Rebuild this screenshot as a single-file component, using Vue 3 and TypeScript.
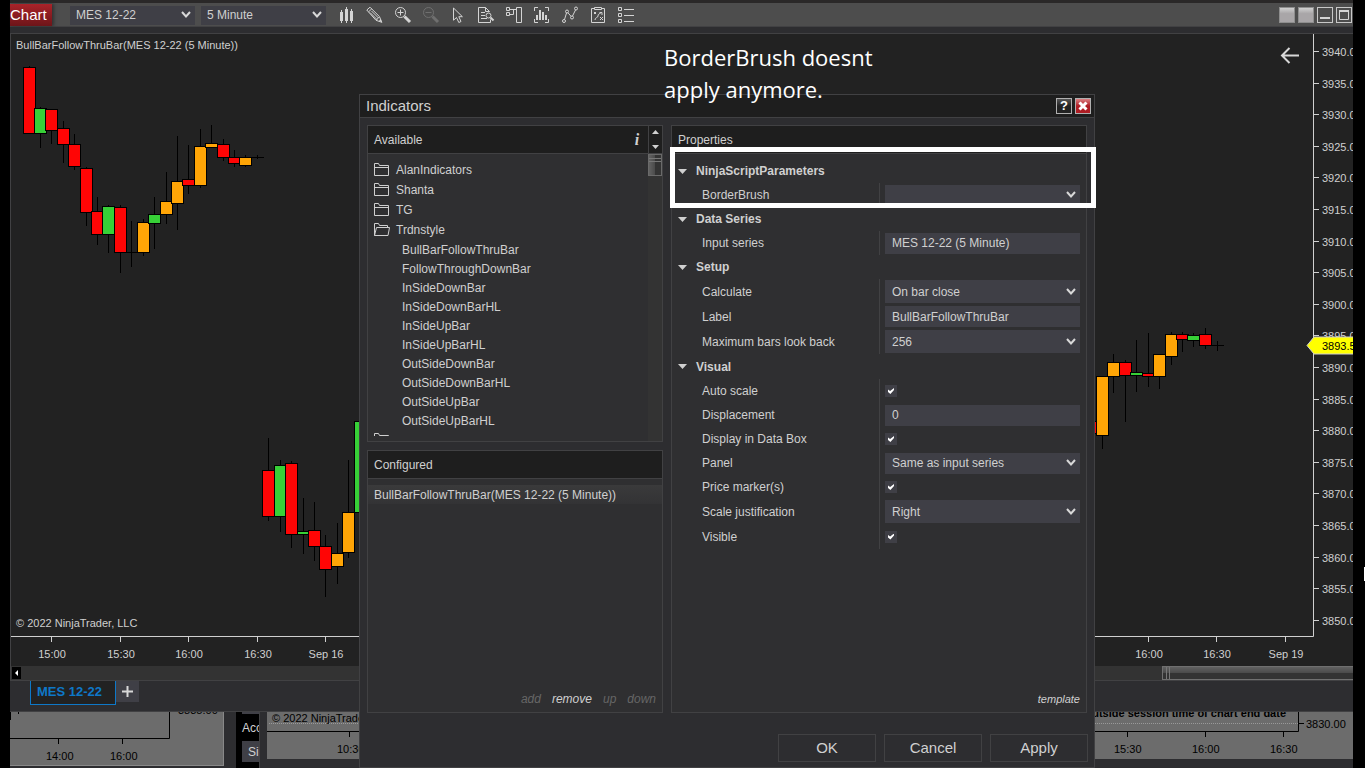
<script setup lang="ts">
import { ref } from 'vue'

type Tone = 'down' | 'up' | 'follow'
// left edge, body top, body bottom, wick top, wick bottom, tone
type Candle = [number, number, number, number, number, Tone]

const candles: Candle[] = [
  [23, 67, 134, 66, 134, 'down'],
  [34, 108, 134, 107, 148, 'up'],
  [45, 109, 131, 109, 144, 'down'],
  [57, 128, 145, 121, 163, 'down'],
  [68, 144, 167, 134, 170, 'down'],
  [80, 168, 213, 167, 226, 'down'],
  [91, 211, 235, 197, 245, 'down'],
  [102, 206, 235, 205, 253, 'up'],
  [114, 207, 253, 205, 273, 'down'],
  [125, 252, 253, 221, 267, 'down'],
  [137, 222, 253, 219, 256, 'follow'],
  [148, 214, 224, 197, 249, 'up'],
  [160, 201, 215, 172, 224, 'follow'],
  [171, 181, 204, 136, 230, 'follow'],
  [182, 179, 186, 145, 194, 'down'],
  [194, 146, 186, 129, 188, 'follow'],
  [205, 143, 148, 125, 148, 'follow'],
  [217, 144, 158, 139, 161, 'down'],
  [228, 157, 164, 150, 167, 'down'],
  [239, 157, 166, 155, 167, 'follow'],
  [251, 157, 158, 155, 159, 'down'],
  [262, 470, 517, 438, 521, 'down'],
  [274, 465, 517, 460, 532, 'up'],
  [285, 463, 535, 461, 548, 'down'],
  [297, 531, 535, 498, 554, 'up'],
  [308, 530, 547, 502, 561, 'down'],
  [319, 546, 570, 535, 597, 'down'],
  [331, 553, 567, 523, 584, 'follow'],
  [342, 512, 553, 460, 558, 'follow'],
  [354, 421, 513, 421, 513, 'up'],
  [1084, 421, 434, 421, 434, 'down'],
  [1096, 376, 436, 376, 449, 'follow'],
  [1107, 362, 377, 354, 393, 'follow'],
  [1119, 362, 376, 360, 422, 'down'],
  [1130, 372, 376, 340, 392, 'up'],
  [1142, 373, 377, 333, 387, 'down'],
  [1153, 354, 377, 354, 389, 'follow'],
  [1165, 334, 357, 332, 365, 'follow'],
  [1176, 334, 340, 332, 352, 'down'],
  [1187, 335, 341, 333, 347, 'up'],
  [1199, 334, 346, 328, 349, 'down'],
  [1211, 345, 346, 341, 351, 'down'],
]

const prices = Array.from({ length: 19 }, (_, i) => ({
  label: (3940 - i * 5).toFixed(1),
  y: Math.round(51 + i * 31.6),
}))

const times = [
  { x: 51, label: '15:00' },
  { x: 120, label: '15:30' },
  { x: 188, label: '16:00' },
  { x: 257, label: '16:30' },
  { x: 325, label: 'Sep 16' },
  { x: 1148, label: '16:00' },
  { x: 1216, label: '16:30' },
  { x: 1285, label: 'Sep 19' },
]

const folders = ['AlanIndicators', 'Shanta', 'TG']
const scripts = [
  'BullBarFollowThruBar', 'FollowThroughDownBar', 'InSideDownBar', 'InSideDownBarHL', 'InSideUpBar',
  'InSideUpBarHL', 'OutSideDownBar', 'OutSideDownBarHL', 'OutSideUpBar', 'OutSideUpBarHL',
]

interface Field {
  id: string
  label: string
  kind: 'select' | 'text' | 'check'
  value: string
  tall?: boolean
  big?: boolean
}
interface Group { name: string; tall?: boolean; fields: Field[] }

const groups = ref<Group[]>([
  { name: 'NinjaScriptParameters', fields: [{ id: 'brush', label: 'BorderBrush', kind: 'select', value: '' }] },
  { name: 'Data Series', fields: [{ id: 'series', label: 'Input series', kind: 'text', value: 'MES 12-22 (5 Minute)' }] },
  {
    name: 'Setup',
    fields: [
      { id: 'calc', label: 'Calculate', kind: 'select', value: 'On bar close', tall: true, big: true },
      { id: 'label', label: 'Label', kind: 'text', value: 'BullBarFollowThruBar', tall: true },
      { id: 'lookback', label: 'Maximum bars look back', kind: 'select', value: '256', tall: true, big: true },
    ],
  },
  {
    name: 'Visual',
    tall: true,
    fields: [
      { id: 'auto', label: 'Auto scale', kind: 'check', value: '' },
      { id: 'disp', label: 'Displacement', kind: 'text', value: '0' },
      { id: 'databox', label: 'Display in Data Box', kind: 'check', value: '' },
      { id: 'panel', label: 'Panel', kind: 'select', value: 'Same as input series' },
      { id: 'marker', label: 'Price marker(s)', kind: 'check', value: '' },
      { id: 'justify', label: 'Scale justification', kind: 'select', value: 'Right', tall: true, big: true },
      { id: 'visible', label: 'Visible', kind: 'check', value: '', tall: true },
    ],
  },
])
</script>

<template>
  <div class="screen">
    <header class="toolbar">
      <h1 class="badge">Chart</h1>
      <div class="pick">
        <select aria-label="Instrument"><option>MES 12-22</option></select>
        <svg class="chev" width="12" height="8" viewBox="0 0 12 8"><path d="M2 1l4 4.500 4-4.500" /></svg>
      </div>
      <div class="pick second">
        <select aria-label="Interval"><option>5 Minute</option></select>
        <svg class="chev" width="12" height="8" viewBox="0 0 12 8"><path d="M2 1l4 4.500 4-4.500" /></svg>
      </div>
      <nav class="tools">
        <button aria-label="Chart style">
          <svg viewBox="0 0 18 18"><path class="fill" d="M2 6h3v9H2zM7 3h3v12H7zM12 5h3v10h-3zM3 4h1v13H3zM8 1h1v16H8zM13 3h1v14h-1z" /></svg>
        </button>
        <button aria-label="Drawing tools">
          <svg viewBox="0 0 18 18"><path d="M.8 4L4 1.2l9.500 9.500 2.300 5.600-5.800-2zM2.600 5.800L5.800 2.800M4 6.500l7 7M5.500 5l7 7M10.300 14l3-3" /><path class="fill" d="M13 14.500l1.500-1.500 1.800 3.800z" /></svg>
        </button>
        <button aria-label="Zoom in">
          <svg viewBox="0 0 18 18"><circle cx="6.500" cy="6.500" r="5" /><path d="M3.500 6.500h6M6.500 3.500v6" /><path class="thick" d="M10.500 10.500l5.500 5.500" /></svg>
        </button>
        <button aria-label="Zoom out" disabled>
          <svg viewBox="0 0 18 18"><circle cx="6.500" cy="6.500" r="5" /><path d="M3.500 6.500h6" /><path class="thick" d="M10.500 10.500l5.500 5.500" /></svg>
        </button>
        <button aria-label="Cursor">
          <svg viewBox="0 0 18 18"><path d="M3.500 2v12.200l3-2.700 2.300 5 2.200-1-2.200-4.800h3.600z" /></svg>
        </button>
        <button aria-label="Data box">
          <svg viewBox="0 0 18 18"><path d="M12.500 13.500v3H.5v-15h7l4 4M7.500 1.500v4h4M3 6.500h4M3 9.500h4M3 12.500h6" /><circle cx="10.500" cy="9.500" r="2.500" /><path d="M12.500 11.500l3 3" stroke-width="2" /></svg>
        </button>
        <button aria-label="Chart trader">
          <svg viewBox="0 0 18 18"><path d="M.5 1.500h3v3h-3zM.5 6.500h3v3h-3zM10.500 1.500h5v15h-5zM4 3.500h6M4 8.500h3.500v-5" /></svg>
        </button>
        <button aria-label="Indicators">
          <svg viewBox="0 0 18 18"><path d="M4 1.500H.5V5M11 1.500h3.500V5M4 16.500H.5V13M11 16.500h3.500V13" /><path class="fill" d="M2 9h2v5H2zM5 4h2v10H5zM8 6h2v8H8zM11 9h2v5h-2z" /></svg>
        </button>
        <button aria-label="Drawing objects">
          <svg viewBox="0 0 18 18"><circle cx="2" cy="15" r="1.500" /><circle cx="5" cy="5.500" r="1.500" /><circle cx="10" cy="11.500" r="1.500" /><circle cx="14" cy="2.500" r="1.500" /><path d="M2.500 13.500L4.500 7M6 6.800l3 3.500M10.500 10l3-6" /></svg>
        </button>
        <button aria-label="Strategies">
          <svg viewBox="0 0 18 18"><path d="M4 2.500H1.500v14h13v-14H12M4.500 1.500h7v2h-7zM4 6l2 2M6 6L4 8M10 11l3 3M13 11l-3 3M5 14c0-3 3-2 3-4s1-2 3.500-3.500M9.500 6.500H12V9" /></svg>
        </button>
        <button aria-label="Properties">
          <svg viewBox="0 0 18 18"><path d="M.5 1.500h3v3h-3zM.5 7.500h3v3h-3zM.5 13.500h3v3h-3zM6 3.500h10M6 9.500h10M6 15.500h10" /></svg>
        </button>
      </nav>
      <div class="winbtns">
        <button class="solid" aria-label="Link instrument"></button>
        <button class="solid" aria-label="Link interval"></button>
        <button aria-label="Minimize"><svg viewBox="0 0 16 16"><path class="fill" d="M3 10h10v2H3z" /></svg></button>
        <button aria-label="Maximize"><svg viewBox="0 0 16 16"><path d="M3.500 3.500h9v9h-9z" /><path class="fill" d="M3 3h10v2H3z" /></svg></button>
      </div>
    </header>

    <main class="chart">
      <svg class="plot" role="img" aria-label="Price chart">
        <g transform="translate(-11 -34)">
          <g v-for="(c, i) in candles" :key="i">
            <rect :x="c[0] + 6" :y="c[3]" width="1" :height="c[4] - c[3]" fill="#000" />
            <rect :x="c[0]" :y="c[1]" width="13" :height="c[2] - c[1]" fill="#000" />
            <rect v-if="c[2] - c[1] > 2" :x="c[0] + 1" :y="c[1] + 1" width="11" :height="c[2] - c[1] - 2" :class="c[5]" />
          </g>
          <text x="16" y="49">BullBarFollowThruBar(MES 12-22 (5 Minute))</text>
          <text x="16" y="627">© 2022 NinjaTrader, LLC</text>
          <path class="axis" d="M11 636.500H1313.500V34" />
          <g v-for="t in times" :key="t.x">
            <rect :x="t.x" y="637" width="1" height="5" fill="#d0d0d0" />
            <text :x="t.x + 1" y="658" text-anchor="middle">{{ t.label }}</text>
          </g>
          <g v-for="p in prices" :key="p.label">
            <rect x="1314" :y="p.y" width="5" height="1" fill="#d0d0d0" />
            <text x="1322" :y="p.y + 5">{{ p.label }}</text>
          </g>
          <path d="M1307 345.500l7-8.500h45v17h-45z" fill="#ffff00" stroke="#d0d0d0" />
          <text class="ink" x="1322" y="350">3893.5</text>
          <path class="back" d="M1299 55.500h-17M1289.500 48l-7.500 7.500 7.500 7.500" />
        </g>
      </svg>
      <div class="scroll">
        <button aria-label="Scroll left"><svg width="9" height="12" viewBox="0 0 9 12"><path d="M6 3v6L3 6z" fill="#fff" /></svg></button>
        <span class="thumb"></span>
      </div>
    </main>

    <div class="tabs">
      <button class="tab">MES 12-22</button>
      <button class="add" aria-label="Add tab"><svg width="11" height="11" viewBox="0 0 11 11"><path d="M5.500 0v11M0 5.500h11" stroke="#d8d8d8" stroke-width="2" /></svg></button>
    </div>

    <div class="behind">
      <svg class="mini first">
        <path d="M.5 0v8M8.500 0v2M0 26.500h159.500V0M48.500 27v5M112.500 27v5" />
        <text x="36" y="48">14:00</text><text x="100" y="48">16:00</text><text x="168" y="2">3835.00</text>
      </svg>
      <div class="account"><span class="stub"></span><span>Acc</span><span class="sim">Sim101</span></div>
      <div class="other">
        <svg class="mini">
          <path class="dots" d="M2 11.500h1029" />
          <path d="M0 19.500h1031.500V0M1032 11.500h5M82.500 20v5M860.500 20v5M938.500 20v5M1016.500 20v5" />
          <text x="5" y="10">© 2022 NinjaTrader, LLC</text>
          <text x="70" y="41">10:30</text>
          <text x="847" y="41">15:30</text><text x="925" y="41">16:00</text><text x="1003" y="41">16:30</text>
          <text x="1039" y="16">3830.00</text>
          <text class="bold" x="1019" y="5" text-anchor="end">is outside session time of chart end date</text>
        </svg>
      </div>
    </div>

    <section class="dialog" role="dialog" aria-label="Indicators">
      <div class="titlebar">
        <h2>Indicators</h2>
        <button class="help" aria-label="Help">?</button>
        <button class="close" aria-label="Close"><svg width="14" height="14" viewBox="0 0 14 14"><path d="M3.500 3.500l7 7M10.500 3.500l-7 7" stroke="#fff" stroke-width="3" /></svg></button>
      </div>
      <div class="body">
        <div class="left">
          <div class="panel available">
            <div class="head">
              <h3>Available</h3>
              <button class="info" aria-label="Information">i</button>
              <div class="spin">
                <button aria-label="Up"><svg width="7" height="4" viewBox="0 0 7 4"><path d="M0 4L3.500 0 7 4z" fill="#d0d0d0" /></svg></button>
                <button aria-label="Down"><svg width="7" height="4" viewBox="0 0 7 4"><path d="M0 0h7L3.500 4z" fill="#d0d0d0" /></svg></button>
              </div>
            </div>
            <div class="treebox">
              <ul class="tree">
                <li v-for="f in folders" :key="f" class="folder">
                  <svg width="16" height="13" viewBox="0 0 16 13"><path d="M.5 12.500V.5h4l1 2h9v10zM.5 4.500h14" /></svg>{{ f }}
                </li>
                <li class="folder">
                  <svg width="16" height="13" viewBox="0 0 16 13"><path d="M.5 12.500V.5h4l1 2h8v2M.5 12.500l2-8h13l-1.500 8z" /></svg>Trdnstyle
                </li>
                <li v-for="s in scripts" :key="s" class="script">{{ s }}</li>
                <li class="folder"><svg width="16" height="13" viewBox="0 0 16 13"><path d="M.5 12.500V.5h4l1 2h9v10zM.5 4.500h14" /></svg></li>
              </ul>
              <div class="vscroll"><span></span></div>
            </div>
          </div>
          <div class="panel configured">
            <div class="head"><h3>Configured</h3></div>
            <div class="item">BullBarFollowThruBar(MES 12-22 (5 Minute))</div>
            <div class="links">
              <button disabled>add</button><button>remove</button><button disabled>up</button><button disabled>down</button>
            </div>
          </div>
        </div>
        <div class="panel props">
          <div class="head"><h3>Properties</h3></div>
          <div class="grid">
            <section v-for="g in groups" :key="g.name">
              <h4 :class="{ tall: g.tall }">
                <svg width="9" height="5" viewBox="0 0 9 5"><path d="M0 0h9L4.500 5z" fill="#d0d0d0" /></svg>{{ g.name }}
              </h4>
              <div v-for="f in g.fields" :key="f.id" class="row" :class="{ tall: f.tall }">
                <label :for="f.id">{{ f.label }}</label>
                <div class="cell">
                  <div v-if="f.kind === 'select'" class="pick value" :class="{ big: f.big }">
                    <select :id="f.id"><option>{{ f.value }}</option></select>
                    <svg class="chev" width="12" height="8" viewBox="0 0 12 8"><path d="M2 1l4 4.500 4-4.500" /></svg>
                  </div>
                  <input v-else-if="f.kind === 'text'" :id="f.id" v-model="f.value" type="text" />
                  <input v-else :id="f.id" type="checkbox" checked />
                </div>
              </div>
            </section>
          </div>
          <div class="links"><button class="template">template</button></div>
        </div>
      </div>
      <div class="actions"><button>OK</button><button>Cancel</button><button>Apply</button></div>
    </section>

    <p class="note">BorderBrush doesnt<br />apply anymore.</p>
    <div class="frame"></div>
    <span class="sliver"></span>
  </div>
</template>

<style>
body { margin: 0; background: #000; }
</style>

<style scoped>
* { box-sizing: border-box; }
.screen {
  position: relative; display: flex; flex-direction: column; min-height: 100vh; padding: 0 12px 0 10px;
  background: #000; color: #d0d0d0; font: 12px/16px "Liberation Sans", Arial, sans-serif; overflow: hidden;
}
h1, h2, h3, h4, p, ul { margin: 0; padding: 0; font-weight: normal; list-style: none; }
button, select, input { margin: 0; padding: 0; border: 0; border-radius: 0; background: none; color: inherit; font: inherit; outline: 0; }
svg { display: block; }

.toolbar { display: flex; align-items: center; height: 27px; padding: 1px 1px 0 0; border-top: 3px solid #2a2828; border-bottom: 1px solid #414143; background: #4d4d4d; }
.badge { width: 42px; height: 22px; margin-right: 18px; background: linear-gradient(#a92329, #6d1519); box-shadow: 2px 0 3px #333; color: #fff; font-size: 15px; line-height: 22px; }
.pick { position: relative; width: 125px; height: 19px; background: #3f3f46; }
.pick.second { margin-left: 6px; }
.pick select { display: block; width: 100%; height: 100%; padding: 0 20px 0 6px; appearance: none; }
.chev { position: absolute; right: 3px; top: 50%; margin-top: -4px; fill: none; stroke: #d8d8d8; stroke-width: 2; pointer-events: none; }
.tools { display: flex; gap: 10px; margin-left: 12px; }
.tools button { width: 18px; height: 18px; }
.tools svg, .winbtns svg { width: 100%; height: 100%; fill: none; stroke: #d4d4d4; stroke-width: 1; }
.tools .thick { stroke-width: 3; }
.tools .fill, .winbtns .fill { fill: #d4d4d4; stroke: none; }
.tools button:disabled { opacity: .25; }
.winbtns { display: flex; gap: 3px; margin-left: auto; }
.winbtns button { width: 16px; height: 16px; border: 1px solid #c8c8c8; }
.winbtns svg { width: 16px; height: 16px; margin: -1px; }
.winbtns .solid { border-color: #8e8e8e; background: linear-gradient(#d0d0d0, #a9a6a8 40%); }

.chart { flex: 1; display: flex; flex-direction: column; margin-top: 6px; border: 1px solid #414143; border-right: 0; background: #222; box-shadow: 0 -6px 0 #2d2d30; }
.plot { flex: 1; width: 100%; min-height: 632px; overflow: hidden; font-size: 11px; fill: #d0d0d0; }
.axis { fill: none; stroke: #d0d0d0; }
.back { fill: none; stroke: #d8d8d8; stroke-width: 2; }
.ink { fill: #000; }
.down { fill: #ff0505; }
.up { fill: #37d037; }
.follow { fill: #ffa506; }
.scroll { display: flex; align-items: center; justify-content: space-between; height: 14px; padding-left: 1px; background: #333; }
.scroll button { background: #000; }
.thumb { width: 191px; height: 14px; border: 1px solid #707070; border-right: 0; background: linear-gradient(90deg, transparent 3px, #777 3px 4px, transparent 4px 6px, #777 6px 7px, transparent 7px), linear-gradient(#626262, #4a4a4a 50%, #333 50%); }

.tabs { display: flex; align-items: flex-start; height: 31px; padding-left: 20px; border-bottom: 1px solid #414143; background: #2d2d30; }
.tab { width: 86px; height: 24px; padding: 0 0 2px 6px; border: 1px solid #0e78c8; border-top: 0; background: #222; color: #0e78c8; font-weight: bold; font-size: 13px; text-align: left; }
.add { display: grid; place-items: center; width: 23px; height: 21px; background: #3f3f46; }

.behind { display: flex; height: 56px; background: #2d2d30; }
.mini { display: block; width: 100%; height: 47px; overflow: hidden; background: #6c6c6c; fill: #000; font-size: 11px; }
.mini path { fill: none; stroke: #000; }
.mini .dots { stroke: #999; stroke-dasharray: 1 1; }
.mini .bold { font-weight: bold; }
.first { flex: none; width: 214px; height: 54px; border-right: 1px solid #888; border-bottom: 1px solid #888; }
.account { display: flex; flex-direction: column; flex: none; width: 23px; margin-left: 12px; padding-left: 6px; background: #000; overflow: hidden; }
.stub { height: 2px; margin-bottom: 6px; background: #3f3f46; }
.sim { height: 21px; margin-top: 5px; padding: 3px 0 0 6px; background: #3f3f46; }
.other { flex: 1; min-width: 0; padding-left: 7px; border-left: 1px solid #414143; }

.dialog { position: absolute; top: 94px; bottom: 0; left: 359px; right: 270px; display: flex; flex-direction: column; border: 1px solid #414143; background: #2d2d30; }
.titlebar { display: flex; align-items: center; gap: 3px; height: 23px; padding: 0 3px 0 6px; border-bottom: 1px solid #414143; background: #1e1e1e; }
.titlebar h2 { flex: 1; font-size: 15px; line-height: 22px; }
.titlebar button { display: grid; place-items: center; width: 16px; height: 16px; border: 1px solid #b0b0b0; background: linear-gradient(#555, #222 50%); color: #fff; font-weight: bold; font-size: 13px; line-height: 14px; }
.titlebar .close { background: linear-gradient(#dc8083, #ae1d24 50%); }
.body { flex: 1; display: flex; gap: 8px; padding: 7px 7px 0; min-height: 0; }
.left { display: flex; flex-direction: column; gap: 8px; width: 296px; }
.panel { border: 1px solid #414143; background: #2f2f31; }
.head { display: flex; align-items: center; height: 28px; padding-left: 6px; border-bottom: 1px solid #414143; background: #1e1e1e; }
.head h3 { flex: 1; font-size: 12px; }
.info { width: 22px; font: italic bold 16px/20px "Liberation Serif", serif; }
.spin { display: flex; flex-direction: column; justify-content: space-between; align-items: center; width: 14px; height: 27px; padding: 4px 0; border-left: 1px solid #414143; }
.available { display: flex; flex-direction: column; height: 317px; }
.treebox { flex: 1; display: flex; min-height: 0; }
.tree { flex: 1; height: 282px; padding: 6px 0 0 6px; overflow: hidden; }
.folder { display: flex; align-items: flex-start; gap: 6px; height: 20px; line-height: 20px; }
.folder svg { margin-top: 3px; fill: none; stroke: #d0d0d0; }
.script { height: 19px; padding-left: 28px; line-height: 20px; }
.vscroll { width: 14px; background: #333; }
.vscroll span { display: block; height: 22px; border: 1px solid #6a6a6a; background: linear-gradient(transparent 3px, #777 3px 4px, transparent 4px 6px, #777 6px 7px, transparent 7px), linear-gradient(90deg, #626262, #4a4a4a 50%, #333 50%); }
.configured, .props { display: flex; flex-direction: column; flex: 1; }
.item { height: 19px; margin-top: 6px; padding-left: 6px; background: linear-gradient(#3a3a3b, #333335); line-height: 20px; }
.links { display: flex; justify-content: flex-end; gap: 11px; margin-top: auto; padding: 0 6px 5px 0; font-style: italic; }
.links button:disabled { color: #666; }
.links .template { font-size: 11px; }
.grid { padding-top: 5px; }
.grid h4 { display: flex; align-items: center; gap: 9px; height: 24px; padding-left: 6px; font-weight: bold; }
.row { display: flex; height: 24px; padding: 0 6px 0 30px; }
.row label { display: flex; align-items: center; width: 177px; }
.cell { flex: 1; display: flex; align-items: center; padding-left: 5px; border-left: 1px solid #414143; }
.grid .tall { height: 25px; }
.value { width: 100%; height: 21px; }
.value.big { height: 23px; }
input[type="text"] { width: 100%; height: 21px; padding: 0 7px; background: #3f3f46; }
.value select { padding-left: 7px; }
input[type="checkbox"] { width: 12px; height: 12px; appearance: none; background: #3f3f46; }
input[type="checkbox"]:checked::after { content: ""; display: block; width: 6px; height: 6px; margin: 3px; background: #fff; clip-path: polygon(0 25%, 35% 50%, 100% 0, 100% 35%, 40% 100%, 0 65%); }
.actions { display: flex; justify-content: flex-end; gap: 8px; padding: 21px 6px 5px; }
.actions button { width: 98px; height: 28px; border: 1px solid #414143; background: #2d2d30; font-size: 15px; }

.note { position: absolute; left: 664px; top: 41px; color: #fff; font: 22px/32px "Open Sans", "Noto Sans", sans-serif; white-space: nowrap; }
.frame { position: absolute; left: 670px; right: 269px; top: 147px; height: 61px; border: 5px solid #fff; pointer-events: none; }
.sliver { position: absolute; right: 0; top: 567px; width: 1px; height: 14px; background: #fff; }
</style>
